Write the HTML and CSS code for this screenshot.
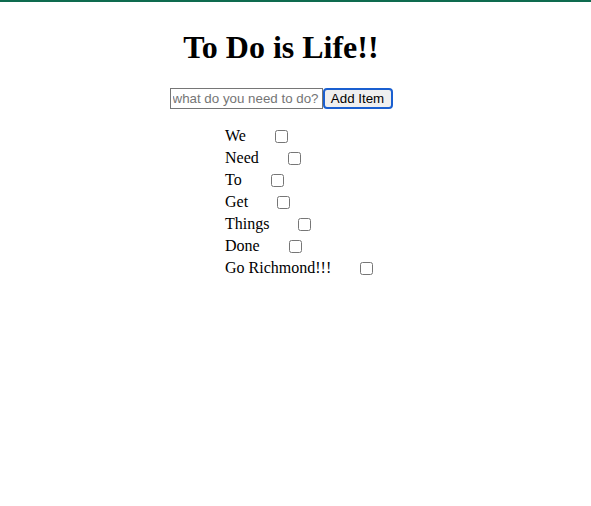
FILE: index.html
```html
<!DOCTYPE html>
<html>
<head>
<meta charset="utf-8">
<link rel="stylesheet" href="styles.css">
</head>
<body>
<div class="topbar"></div>
<div class="app">
  <h1 class="title">To Do is Life!!</h1>
  <form class="add-form">
    <input class="add-input" type="text" placeholder="what do you need to do?"><button class="add-btn" type="button">Add Item</button>
  </form>
  <ul class="todo-list">
    <li class="todo"><span class="todo-text">We</span><input class="todo-check" type="checkbox"></li>
    <li class="todo"><span class="todo-text">Need</span><input class="todo-check" type="checkbox"></li>
    <li class="todo"><span class="todo-text">To</span><input class="todo-check" type="checkbox"></li>
    <li class="todo"><span class="todo-text">Get</span><input class="todo-check" type="checkbox"></li>
    <li class="todo"><span class="todo-text">Things</span><input class="todo-check" type="checkbox"></li>
    <li class="todo"><span class="todo-text">Done</span><input class="todo-check" type="checkbox"></li>
    <li class="todo"><span class="todo-text">Go Richmond!!!</span><input class="todo-check" type="checkbox"></li>
  </ul>
</div>
</body>
</html>
```
FILE: styles.css
```css
html, body {
  margin: 0;
  padding: 0;
  background: #fff;
  font-family: "Liberation Serif", "Times New Roman", serif;
  color: #000;
}
.topbar {
  height: 2px;
  background: #0e6b4f;
}
.app {
  width: 562px;
  display: flex;
  flex-direction: column;
  align-items: center;
}
.title {
  font-size: 32px;
  font-weight: bold;
  margin: 27px 0 0 0;
  line-height: 37px;
}
.add-form {
  display: flex;
  margin-top: 22px;
  height: 21px;
}
.add-input {
  box-sizing: border-box;
  width: 153px;
  height: 21px;
  margin: 0;
  padding: 1px 2px;
  border: 1px solid #767676;
  border-radius: 0;
  font-family: "Liberation Sans", Arial, sans-serif;
  font-size: 13.33px;
  color: #000;
}
.add-input::placeholder {
  color: #757575;
}
.add-btn {
  box-sizing: border-box;
  height: 21px;
  width: 70px;
  margin: 0;
  padding: 0 5px;
  border: 2px solid #1a5fd0;
  border-radius: 4px;
  background: #efefef;
  font-family: "Liberation Sans", Arial, sans-serif;
  font-size: 13.33px;
  color: #000;
}
.todo-list {
  list-style: none;
  margin: 16px 0 0 0;
  align-self: stretch;
  display: flex;
  flex-direction: column;
  padding: 0 0 0 225px;
}
.todo {
  display: flex;
  align-items: center;
  height: 22px;
  font-size: 16px;
}
.todo-check {
  width: 13px;
  height: 13px;
  margin: 0 0 0 29px;
}
```
